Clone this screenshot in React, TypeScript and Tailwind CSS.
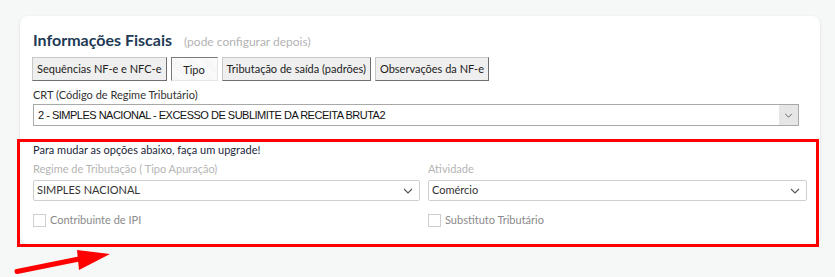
const TABS = [
  { label: 'Sequências NF-e e NFC-e', active: false },
  { label: 'Tipo', active: true },
  { label: 'Tributação de saída (padrões)', active: false },
  { label: 'Observações da NF-e', active: false },
];

function Chevron({ className = '' }: { className?: string }) {
  return (
    <svg viewBox="0 0 10 6" fill="none" className={className}>
      <path d="M1 1l4 4 4-4" stroke="currentColor" strokeWidth="1.1" />
    </svg>
  );
}

function LightSelect({ value }: { value: string }) {
  return (
    <div className="flex h-[21px] items-center justify-between rounded-[2px] border border-[#cfcfcf] bg-white pl-[3px] pr-[6px] text-[11px] text-[#333]">
      <span>{value}</span>
      <Chevron className="h-[6px] w-[10px] text-[#555]" />
    </div>
  );
}

function Check({ label }: { label: string }) {
  return (
    <label className="flex items-center gap-[4px] text-[11px] leading-[14px] text-[#8a8a8a]">
      <span className="h-[13px] w-[13px] border border-[#cfcfcf] bg-white" />
      {label}
    </label>
  );
}

export default function App() {
  return (
    <div className="relative h-[277px] overflow-hidden bg-[#f6f7f7] pl-5 pt-4 font-['Lato','Open_Sans',sans-serif]">
      <div className="h-[228px] w-[800px] rounded-[8px] bg-white px-[13px] pt-[15px] shadow-[0_1px_3px_rgba(0,0,0,0.12)]">
        <div className="flex h-[18px] items-baseline gap-3 leading-[18px]">
          <h2 className="text-[16px] font-bold text-[#223a55]">Informações Fiscais</h2>
          <span className="text-[12px] leading-[14px] text-[#b3b3b3]">(pode configurar depois)</span>
        </div>

        <div className="-ml-px mt-2 flex gap-[4px]">
          {TABS.map((tab) =>
            tab.active ? (
              <button
                key={tab.label}
                type="button"
                className="h-[24px] w-[47px] border border-b-[#e6e6e6] border-l-[#7a7a7a] border-r-[#e6e6e6] border-t-[#7a7a7a] bg-[repeating-linear-gradient(45deg,#f4f4f4_0px,#f4f4f4_1px,#fdfdfd_1px,#fdfdfd_2px)] pt-[3px] text-[11px] text-[#222]"
              >
                {tab.label}
              </button>
            ) : (
              <button
                key={tab.label}
                type="button"
                className="h-[24px] border border-b-[#6f6f6f] border-l-[#c8c8c8] border-r-[#6f6f6f] border-t-[#c8c8c8] bg-[#efefef] px-[4px] text-[11px] text-[#222]"
              >
                {tab.label}
              </button>
            )
          )}
        </div>

        <div className="mt-[7px] text-[11px] leading-[14px] text-[#333]">CRT (Código de Regime Tributário)</div>
        <div className="mt-[2px] flex h-[22px] w-[766px] items-stretch border border-[#a9a9a9] bg-white font-['Liberation_Sans',Arial,sans-serif] text-[11px] tracking-[-0.5px] text-[#111]">
          <span className="flex flex-1 items-center pl-[4px]">2 - SIMPLES NACIONAL - EXCESSO DE SUBLIMITE DA RECEITA BRUTA2</span>
          <span className="flex w-[19px] items-center justify-center bg-[#e6e6e6] text-[#555]">
            <Chevron className="h-[5px] w-[9px]" />
          </span>
        </div>

        <div className="mt-[17px] text-[11px] leading-[14px] text-[#1b1f3b]">Para mudar as opções abaixo, faça um upgrade!</div>

        <div className="mt-[5px] grid grid-cols-[387px_379px] gap-x-[8px]">
          <div>
            <div className="text-[11px] leading-[14px] text-[#b5b5b5]">Regime de Tributação ( Tipo Apuração)</div>
            <div className="mt-[4px]">
              <LightSelect value="SIMPLES NACIONAL" />
            </div>
            <div className="mt-[12px]">
              <Check label="Contribuinte de IPI" />
            </div>
          </div>
          <div>
            <div className="text-[11px] leading-[14px] text-[#b5b5b5]">Atividade</div>
            <div className="mt-[4px]">
              <LightSelect value="Comércio" />
            </div>
            <div className="mt-[12px]">
              <Check label="Substituto Tributário" />
            </div>
          </div>
        </div>
      </div>

      {/* annotation overlay */}
      <div className="pointer-events-none absolute left-[17px] top-[139px] h-[108px] w-[802px] border-[3px] border-[#ff0000]" />
      <svg className="pointer-events-none absolute left-0 top-[246px] h-[31px] w-[120px]" viewBox="0 0 120 31" fill="none">
        <path d="M17 25.5L84 12" stroke="#ff0000" strokeWidth="5" strokeLinecap="round" />
        <path d="M77 4L110 8L79 24Z" fill="#ff0000" />
      </svg>
    </div>
  );
}
